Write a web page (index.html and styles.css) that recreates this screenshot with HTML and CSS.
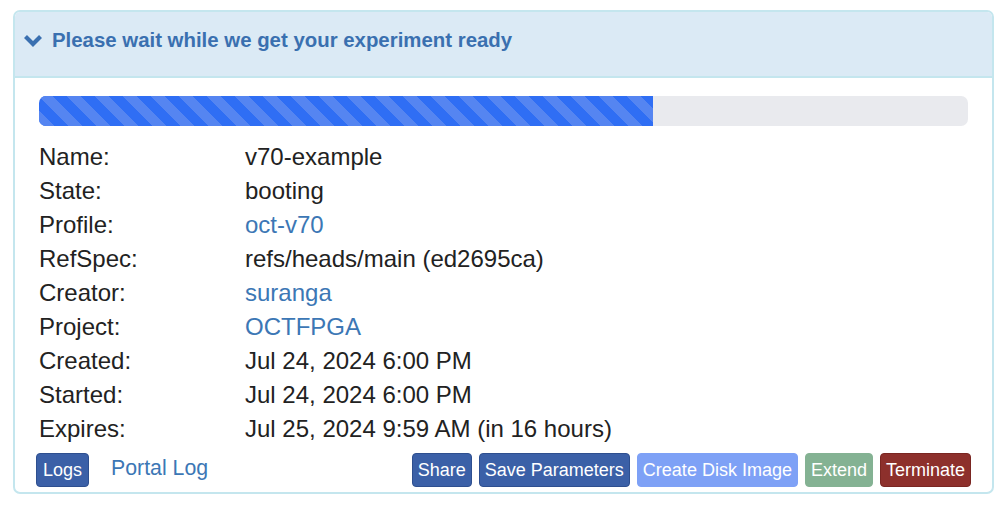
FILE: index.html
```html
<!DOCTYPE html>
<html>
<head>
<meta charset="utf-8">
<link rel="stylesheet" href="styles.css">
</head>
<body>
<div class="panel">
  <div class="panel-heading">
    <svg class="chev" width="20" height="14" viewBox="0 0 20 14"><polyline points="2.5,2.5 10,10 17.5,2.5" fill="none" stroke="#3a70b0" stroke-width="4.2" stroke-linecap="butt" stroke-linejoin="miter"/></svg>
    <span class="title">Please wait while we get your experiment ready</span>
  </div>
  <div class="panel-body">
    <div class="progress"><div class="bar" style="width:66.1%"></div></div>
    <div class="info">
      <div class="row"><span class="lbl">Name:</span><span class="val">v70-example</span></div>
      <div class="row"><span class="lbl">State:</span><span class="val">booting</span></div>
      <div class="row"><span class="lbl">Profile:</span><a class="val link">oct-v70</a></div>
      <div class="row"><span class="lbl">RefSpec:</span><span class="val">refs/heads/main (ed2695ca)</span></div>
      <div class="row"><span class="lbl">Creator:</span><a class="val link">suranga</a></div>
      <div class="row"><span class="lbl">Project:</span><a class="val link">OCTFPGA</a></div>
      <div class="row"><span class="lbl">Created:</span><span class="val">Jul 24, 2024 6:00 PM</span></div>
      <div class="row"><span class="lbl">Started:</span><span class="val">Jul 24, 2024 6:00 PM</span></div>
      <div class="row"><span class="lbl">Expires:</span><span class="val">Jul 25, 2024 9:59 AM (in 16 hours)</span></div>
    </div>
    <div class="actions">
      <div class="left">
        <button class="btn primary logs">Logs</button>
        <a class="portal link">Portal Log</a>
      </div>
      <div class="right">
        <button class="btn primary">Share</button>
        <button class="btn primary">Save Parameters</button>
        <button class="btn light">Create Disk Image</button>
        <button class="btn green">Extend</button>
        <button class="btn red">Terminate</button>
      </div>
    </div>
  </div>
</div>
</body>
</html>
```
FILE: styles.css
```css
html, body {
  margin: 0;
  padding: 0;
  background: #fff;
  font-family: "Liberation Sans", Arial, sans-serif;
}
body {
  padding: 10px 10px 0 13px;
}
.panel {
  width: 981px;
  height: 484px;
  box-sizing: border-box;
  border: 2px solid #c4e6ee;
  border-radius: 7px;
  overflow: hidden;
  display: flex;
  flex-direction: column;
}
.panel-heading {
  height: 66px;
  flex: none;
  box-sizing: border-box;
  background: #dbeaf5;
  border-bottom: 2px solid #c4e6ee;
  display: flex;
  align-items: center;
  padding-left: 8px;
  padding-bottom: 8px;
}
.chev {
  margin-right: 9px;
  margin-top: 1px;
}
.title {
  color: #3a70b0;
  font-weight: bold;
  font-size: 20.4px;
}
.panel-body {
  flex: 1;
  padding: 18px 24px 0 24px;
  display: flex;
  flex-direction: column;
}
.progress {
  height: 30px;
  flex: none;
  background: #e9eaee;
  border-radius: 7px;
  overflow: hidden;
}
.bar {
  height: 100%;
  background-color: #2f6ef4;
  background-size: 28px 28px;
  background-image: linear-gradient(45deg, #5585f1 25%, transparent 25%, transparent 50%, #5585f1 50%, #5585f1 75%, transparent 75%, transparent);
}
.info {
  margin-top: 14px;
  display: flex;
  flex-direction: column;
}
.row {
  display: flex;
  height: 34px;
  align-items: center;
  font-size: 24px;
  color: #222;
}
.lbl {
  width: 206px;
}
.link {
  color: #3c77b5;
  text-decoration: none;
}
.actions {
  margin-top: 7px;
  display: flex;
  justify-content: space-between;
  align-items: center;
}
.left, .right {
  display: flex;
  align-items: center;
}
.left {
  margin-left: -3px;
}
.right {
  gap: 7px;
  margin-right: -3px;
}
.portal {
  font-size: 21.3px;
  margin-left: 22px;
  margin-top: -4px;
}
.btn {
  height: 34px;
  box-sizing: border-box;
  border-radius: 4px;
  border: 1px solid transparent;
  font-family: "Liberation Sans", Arial, sans-serif;
  font-size: 18px;
  color: #fff;
  padding: 0 5px;
}
.logs {
  padding: 0 6px;
}
.primary {
  background: #3b60a7;
  border-color: #2e4f8f;
}
.light {
  background: #7ea1f6;
  border-color: #7ea1f6;
}
.green {
  background: #84b293;
  border-color: #84b293;
}
.red {
  background: #8d302c;
  border-color: #7a2622;
}
```
